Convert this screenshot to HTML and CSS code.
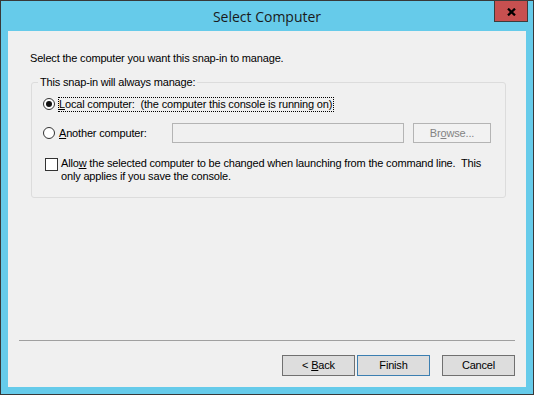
FILE: index.html
```html
<!DOCTYPE html>
<html>
<head>
<meta charset="utf-8">
<title>Select Computer</title>
<link rel="stylesheet" href="styles.css">
</head>
<body>
<div class="window">
  <div class="titlebar">
    <span class="title">Select Computer</span>
    <div class="close" aria-label="Close">
      <svg width="9" height="8" viewBox="0 0 9 8"><path d="M1 0.6 L8 7.4 M8 0.6 L1 7.4" stroke="#000" stroke-width="2.2" fill="none"/></svg>
    </div>
  </div>
  <div class="client">
    <p class="intro">Select the computer you want this snap-in to manage.</p>
    <div class="group">
      <span class="group-label">This snap-in will always manage:</span>
      <div class="row row-local">
        <span class="radio checked"></span>
        <span class="label focus"><u>L</u>ocal computer:&nbsp; (the computer this console is running on)</span>
      </div>
      <div class="row row-other">
        <span class="radio"></span>
        <span class="label other-label"><u>A</u>nother computer:</span>
        <span class="textbox"></span>
        <span class="btn browse"><span>Br<u>o</u>wse...</span></span>
      </div>
      <div class="check-row">
        <span class="checkbox"></span>
        <span class="check-text">Allo<u>w</u> the selected computer to be changed when launching from the command line.&nbsp; This<br>only applies if you save the console.</span>
      </div>
    </div>
    <div class="separator"></div>
    <div class="buttons">
      <span class="btn"><span>&lt; <u>B</u>ack</span></span>
      <span class="btn default"><span>Finish</span></span>
      <span class="btn cancel"><span>Cancel</span></span>
    </div>
  </div>
</div>
</body>
</html>
```
FILE: styles.css
```css
html, body {
  margin: 0;
  padding: 0;
}
body {
  width: 534px;
  height: 395px;
  overflow: hidden;
  font-family: "Liberation Sans", Arial, sans-serif;
  font-size: 11px;
  line-height: 13px;
  letter-spacing: -0.17px;
  color: #000;
}
.window {
  box-sizing: border-box;
  width: 534px;
  height: 395px;
  border: 1px solid #383838;
  background: #66cbea;
  display: flex;
  flex-direction: column;
}
.titlebar {
  position: relative;
  height: 30px;
  flex: none;
  display: flex;
  justify-content: center;
  align-items: center;
}
.title {
  font-family: "Open Sans", "Noto Sans", sans-serif;
  font-size: 14px;
  line-height: 20px;
  letter-spacing: 0;
  color: #1a1a1a;
  margin-top: 1px;
}
.close {
  position: absolute;
  top: -1px;
  right: 5px;
  box-sizing: border-box;
  width: 34px;
  height: 22px;
  background: #c75050;
  border: 1px solid #3c3c3c;
  display: flex;
  align-items: center;
  justify-content: center;
}
.close svg {
  display: block;
  margin-top: 1px;
}
.client {
  flex: 1;
  margin: 0 7px 7px 7px;
  background: #f0f0f0;
  display: flex;
  flex-direction: column;
}
.intro {
  margin: 21px 0 0 22px;
  white-space: nowrap;
}
.group {
  position: relative;
  box-sizing: border-box;
  margin: 17px 0 0 23px;
  width: 475px;
  height: 116px;
  border: 1px solid #dcdcdc;
  border-radius: 3px;
  padding: 11px 0 0 11px;
}
.group-label {
  position: absolute;
  top: -7px;
  left: 6px;
  padding: 0 2px;
  background: #f0f0f0;
  white-space: nowrap;
}
.row {
  display: flex;
  align-items: center;
  height: 20px;
}
.row-other {
  margin-top: 9px;
}
.radio {
  box-sizing: border-box;
  width: 12px;
  height: 12px;
  border: 1px solid #333;
  border-radius: 50%;
  background: #fff;
  display: flex;
  align-items: center;
  justify-content: center;
  flex: none;
}
.radio.checked::after {
  content: "";
  width: 6px;
  height: 6px;
  border-radius: 50%;
  background: #111;
}
.label {
  white-space: nowrap;
  margin-left: 4px;
}
.label.focus {
  margin-left: 3px;
  border: 1px dotted #000;
  padding: 0 1px 0 0;
}
.other-label {
  width: 113px;
  flex: none;
}
.textbox {
  box-sizing: border-box;
  width: 232px;
  height: 20px;
  border: 1px solid #b4b4b4;
  background: #f0f0f0;
  flex: none;
}
.btn {
  box-sizing: border-box;
  width: 73px;
  height: 21px;
  border: 1px solid #707070;
  background: #dddddd;
  display: flex;
  align-items: center;
  justify-content: center;
  white-space: nowrap;
  flex: none;
}
.btn.browse {
  width: 78px;
  height: 20px;
  margin-left: 9px;
  border-color: #b4b4b4;
  background: #f2f2f2;
  color: #838383;
}
.check-row {
  display: flex;
  align-items: flex-start;
  margin-top: 14px;
  padding-left: 2px;
}
.checkbox {
  box-sizing: border-box;
  width: 13px;
  height: 13px;
  border: 1px solid #333;
  background: #fff;
  margin-top: 1px;
  flex: none;
}
.check-text {
  margin-left: 3px;
  white-space: nowrap;
}
.separator {
  margin: auto 11px 0 11px;
  height: 1px;
  background: #a0a0a0;
}
.buttons {
  display: flex;
  justify-content: flex-end;
  gap: 2px;
  margin: 14px 11px 11px 0;
}
.btn.default {
  border-color: #3c7fb1;
}
.btn.cancel {
  margin-left: 10px;
}
```
